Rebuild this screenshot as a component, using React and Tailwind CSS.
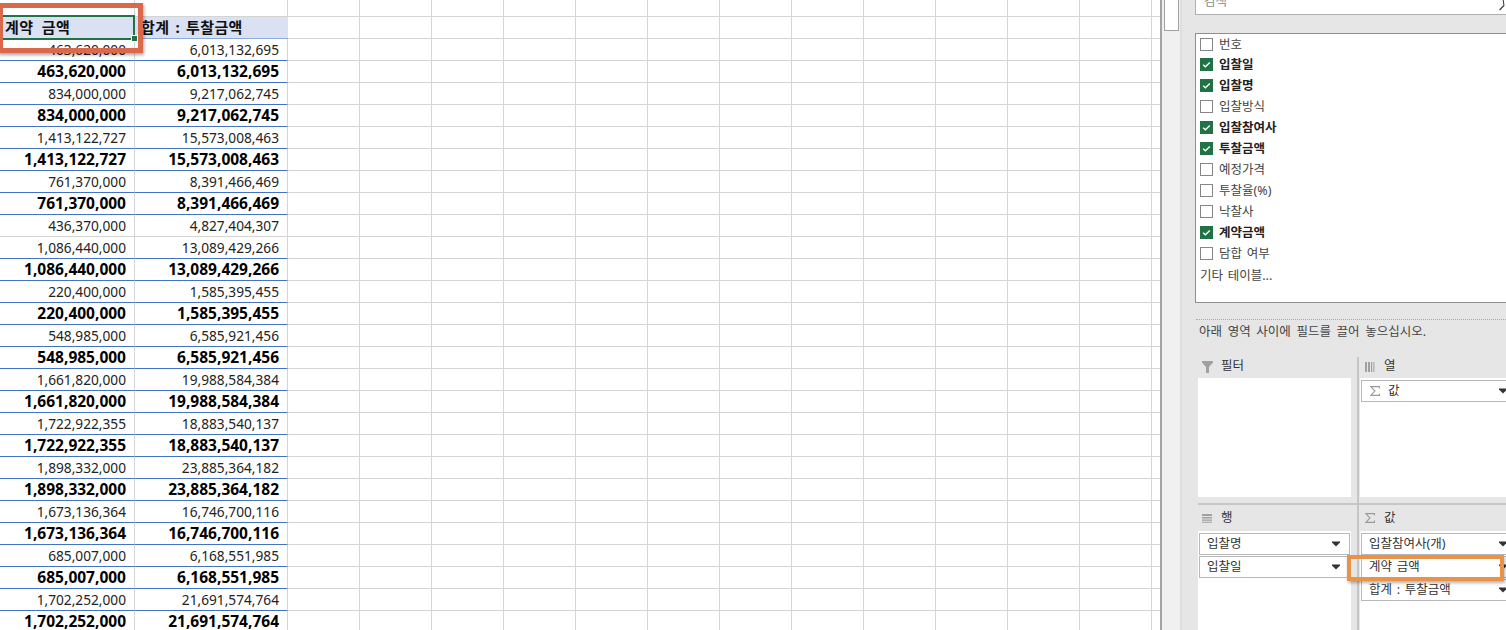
import React from "react";

const DATA = [
  ["463,620,000", "6,013,132,695", 1],
  ["834,000,000", "9,217,062,745", 1],
  ["1,413,122,727", "15,573,008,463", 1],
  ["761,370,000", "8,391,466,469", 1],
  ["436,370,000", "4,827,404,307", 0],
  ["1,086,440,000", "13,089,429,266", 1],
  ["220,400,000", "1,585,395,455", 1],
  ["548,985,000", "6,585,921,456", 1],
  ["1,661,820,000", "19,988,584,384", 1],
  ["1,722,922,355", "18,883,540,137", 1],
  ["1,898,332,000", "23,885,364,182", 1],
  ["1,673,136,364", "16,746,700,116", 1],
  ["685,007,000", "6,168,551,985", 1],
  ["1,702,252,000", "21,691,574,764", 1],
];

const rows = [];
DATA.forEach(([a, b, sub]) => {
  rows.push({ a, b, bold: false, blue: sub === 1 });
  if (sub) rows.push({ a, b, bold: true, blue: true });
});

const BLANKS = Array.from({ length: 12 }, (_, i) => i);

function BlankCells() {
  return (
    <>
      {BLANKS.map((i) => (
        <div key={i} className="w-[72px] shrink-0 border-r border-b border-[#d4d4d4]" />
      ))}
      <div className="flex-1 border-b border-[#d4d4d4]" />
    </>
  );
}

function DataRow({ a, b, bold, blue }) {
  const line = blue ? "border-b-[#4472c4]" : "border-b-[#d4d4d4]";
  const text = bold
    ? "font-bold text-[15.5px] text-black"
    : "text-[13.7px] text-[#222222]";
  return (
    <div className="flex h-[22px] shrink-0">
      <div className={`w-[135px] shrink-0 border-r border-b border-[#d4d4d4] ${line} pr-[8px] text-right leading-[21px] ${text}`}>{a}</div>
      <div className={`w-[153px] shrink-0 border-r border-b border-[#d4d4d4] ${line} pr-[8px] text-right leading-[21px] ${text}`}>{b}</div>
      <BlankCells />
    </div>
  );
}

function Sheet() {
  return (
    <div className="relative w-[1160px] h-[630px] shrink-0 overflow-hidden bg-white flex flex-col">
      <div className="flex h-[17px] shrink-0">
        <div className="w-[135px] shrink-0 border-r border-b border-[#d4d4d4]" />
        <div className="w-[153px] shrink-0 border-r border-b border-[#d4d4d4]" />
        <BlankCells />
      </div>
      <div className="flex h-[22px] shrink-0">
        <div className="w-[135px] shrink-0 bg-[#d9e1f2] border-b border-[#8ea9db] pl-[5px] font-bold text-[15px] leading-[21px] tracking-[0.4px] [word-spacing:4px] text-[#111111]">계약 금액</div>
        <div className="w-[153px] shrink-0 bg-[#d9e1f2] border-b border-[#8ea9db] pl-[6px] font-bold text-[15px] leading-[21px] tracking-[0.4px] [word-spacing:1.7px] text-[#111111] whitespace-nowrap">합계 : 투찰금액</div>
        <BlankCells />
      </div>
      {rows.map((r, i) => (
        <DataRow key={i} {...r} />
      ))}
      <div className="absolute left-0 top-[15px] w-[135px] h-[25px] border-2 border-l-0 border-[#217346]" />
      <div className="absolute left-[132px] top-[36px] w-[5px] h-[5px] bg-[#217346] outline outline-1 outline-white" />
      <div className="absolute left-[-2px] top-[3px] w-[145px] h-[50px] border-[5px] border-[#d9694a] shadow-[1px_2px_3px_rgba(0,0,0,0.35)]" />
    </div>
  );
}

function Scrollbar() {
  return (
    <div className="w-[20px] h-[630px] shrink-0 border-l-2 border-[#a3a3a3] bg-[#f0f0f0] pl-[2px]">
      <div className="w-[15px] h-[31px] bg-white border-x border-b border-[#a0a0a0]" />
    </div>
  );
}

function Check() {
  return (
    <svg width="13" height="13" viewBox="0 0 13 13" className="shrink-0 block">
      <rect width="13" height="13" fill="#217346" />
      <path d="M3.2 6.8 L5.4 8.8 L9.8 4.6" fill="none" stroke="#ffffff" strokeWidth="1.4" />
    </svg>
  );
}

function Field({ label, checked, first }) {
  return (
    <div className={`flex items-center pl-[4px] ${first ? "h-[20px]" : "h-[21px]"}`}>
      {checked ? <Check /> : <div className="w-[13px] h-[13px] shrink-0 border border-[#868686] bg-white" />}
      <span className={`ml-[6px] text-[12.5px] leading-[21px] [word-spacing:1.5px] ${checked ? "font-bold text-[#222222]" : "text-[#444444]"}`}>{label}</span>
    </div>
  );
}

function Arrow() {
  return (
    <svg width="8" height="6" viewBox="0 0 8 6" className="block shrink-0">
      <path d="M0 0.5 H8 V1.5 L4 5.5 L0 1.5 Z" fill="#333333" />
    </svg>
  );
}

function Pill({ children, className = "" }) {
  return (
    <div className={`h-[22px] flex items-center justify-between border border-[#b8b8b8] bg-white pl-[7px] pr-[9px] text-[12.5px] [word-spacing:1.5px] text-[#333333] ${className}`}>
      <span className="flex items-center leading-[20px] whitespace-nowrap">{children}</span>
      <Arrow />
    </div>
  );
}

function Sigma({ className = "" }) {
  return (
    <svg width="10" height="10" viewBox="0 0 10 10" className={`block shrink-0 ${className}`}>
      <path d="M9.5 2.6 V0.6 H0.8 L5 5 L0.8 9.4 H9.5 V7.4" fill="none" stroke="#9a9a9a" strokeWidth="1.1" />
    </svg>
  );
}

function Funnel() {
  return (
    <svg width="11" height="12" viewBox="0 0 11 12" className="block shrink-0">
      <path d="M0 0 H11 V1.5 L7 6 V12 H4 V6 L0 1.5 Z" fill="#a0a0a0" />
    </svg>
  );
}

function Cols() {
  return (
    <svg width="10" height="10" viewBox="0 0 10 10" className="block shrink-0">
      <path d="M0 0h2v10H0zM3 0h2v10H3zM6 0h1.2v10H6zM8.4 0h1v10h-1z" fill="#a0a0a0" />
    </svg>
  );
}

function RowsIcon() {
  return (
    <svg width="10" height="9" viewBox="0 0 10 9" className="block shrink-0">
      <path d="M0 0h10v2H0zM0 3h10v1.6H0zM0 5.6h10v1.2H0zM0 7.8h10v1H0z" fill="#a0a0a0" />
    </svg>
  );
}

function AreaHead({ icon, label, className = "" }) {
  return (
    <div className={`flex items-center text-[12.5px] text-[#333333] ${className}`}>
      <div className="w-[23px] flex justify-start pl-[4px]">{icon}</div>
      <span>{label}</span>
    </div>
  );
}

function Panel() {
  return (
    <div className="relative w-[324px] h-[630px] shrink-0 overflow-hidden bg-[#e6e6e6]">
      <div className="w-[360px] pl-[13px]">
        <div className="relative h-[15px] border border-t-0 border-[#b0b0b0] bg-white overflow-hidden">
          <span className="absolute left-[8px] top-[-7px] text-[12.5px] leading-[18px] text-[#8a8a8a]">검색</span>
          <svg width="10" height="11" viewBox="0 0 10 11" className="absolute left-[303px] top-0">
            <path d="M0.5 10 L5 5.5" stroke="#333333" strokeWidth="1.1" fill="none" />
            <path d="M5 5.5 L4.2 0" stroke="#333333" strokeWidth="1" fill="none" />
          </svg>
        </div>
        <div className="mt-[18px] h-[270px] border border-r-0 border-[#8f8f8f] bg-white box-border">
          <Field label="번호" first />
          <Field label="입찰일" checked />
          <Field label="입찰명" checked />
          <Field label="입찰방식" />
          <Field label="입찰참여사" checked />
          <Field label="투찰금액" checked />
          <Field label="예정가격" />
          <Field label="투찰율(%)" />
          <Field label="낙찰사" />
          <Field label="계약금액" checked />
          <Field label="담합 여부" />
          <div className="pl-[4px] text-[12.5px] leading-[23px] [word-spacing:1.5px] text-[#444444]">기타 테이블...</div>
        </div>
      </div>
      <div className="mt-[16px] ml-[14px] border-t border-dotted border-[#a8a8a8]" />
      <div className="ml-[17px] mt-[2px] h-[19px] text-[12.5px] leading-[19px] [word-spacing:2.4px] text-[#444444] whitespace-nowrap">아래 영역 사이에 필드를 끌어 놓으십시오.</div>
      <div className="mt-[16px] ml-[16px] w-[360px]">
        <div className="flex h-[148px] border-b-2 border-[#c6c6c6]">
          <div className="w-[159px] shrink-0 border-r-2 border-[#c6c6c6] box-content">
            <AreaHead icon={<Funnel />} label="필터" className="h-[21px] pb-[2px]" />
            <div className="w-[153px] h-[119px] bg-white" />
          </div>
          <div className="flex-1 pl-[1px]">
            <AreaHead icon={<Cols />} label="열" className="h-[21px] pb-[2px] ml-[1px]" />
            <div className="h-[119px] bg-white pt-[2px] pl-[1px]">
              <Pill className="w-[156px]"><Sigma className="ml-[1px] mr-[8px]" />값</Pill>
            </div>
          </div>
        </div>
        <div className="flex h-[130px]">
          <div className="w-[159px] shrink-0 border-r-2 border-[#c6c6c6] box-content">
            <AreaHead icon={<RowsIcon />} label="행" className="h-[26px]" />
            <div className="w-[153px] h-[104px] bg-white pt-[2px] px-[1px] flex flex-col gap-[1px]">
              <Pill>입찰명</Pill>
              <Pill>입찰일</Pill>
            </div>
          </div>
          <div className="flex-1 pl-[1px]">
            <AreaHead icon={<Sigma />} label="값" className="h-[26px] ml-[1px]" />
            <div className="h-[104px] bg-white pt-[2px] pl-[1px] flex flex-col gap-[1px]">
              <Pill className="w-[156px]">입찰참여사(개)</Pill>
              <Pill className="w-[156px]">계약 금액</Pill>
              <Pill className="w-[156px]">합계 : 투찰금액</Pill>
            </div>
          </div>
        </div>
      </div>
      <div className="absolute left-[165px] top-[555px] w-[157px] h-[26px] border-[4px] border-[#e8924a] shadow-[1px_2px_3px_rgba(0,0,0,0.3)]" />
    </div>
  );
}

export default function App() {
  return (
    <div className="flex w-[1506px] h-[630px] overflow-hidden bg-white font-['Noto_Sans','Noto_Sans_CJK_KR',sans-serif]">
      <Sheet />
      <Scrollbar />
      <div className="w-[2px] h-[630px] shrink-0 bg-[#dedede]" />
      <Panel />
    </div>
  );
}
